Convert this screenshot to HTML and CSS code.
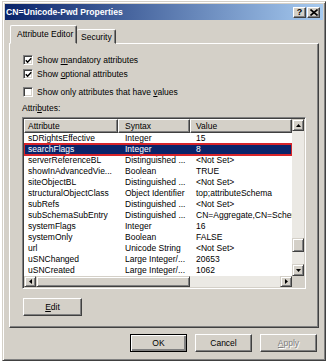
FILE: index.html
```html
<!DOCTYPE html>
<html lang="en">
<head>
    <meta charset="UTF-8">
    <title>CN=Unicode-Pwd Properties</title>
    <link rel="stylesheet" href="styles.css">
</head>
<body>
    <div class="window">
        <div class="titlebar">
            <span class="title">CN=Unicode-Pwd Properties</span>
            <div class="caption-btns">
                <span class="cbtn">?</span>
                <span class="cbtn">
                    <svg width="8" height="7" viewBox="0 0 8 7"><path d="M0.5 0.5 L7.5 6.5 M7.5 0.5 L0.5 6.5" stroke="#000" stroke-width="1.6"/></svg>
                </span>
            </div>
        </div>

        <div class="tabs">
            <span class="tab active">Attribute Editor</span>
            <span class="tab">Security</span>
        </div>

        <div class="panel">
            <label class="check first">
                <span class="box"><svg width="7" height="7" viewBox="0 0 7 7"><path d="M0.8 3.2 L2.6 5.2 L6.3 1.2" fill="none" stroke="#000" stroke-width="1.5"/></svg></span>
                <span>Show <u>m</u>andatory attributes</span>
            </label>
            <label class="check">
                <span class="box"><svg width="7" height="7" viewBox="0 0 7 7"><path d="M0.8 3.2 L2.6 5.2 L6.3 1.2" fill="none" stroke="#000" stroke-width="1.5"/></svg></span>
                <span>Show <u>o</u>ptional attributes</span>
            </label>
            <label class="check third">
                <span class="box"></span>
                <span>Show only attributes that have <u>v</u>alues</span>
            </label>
            <div class="list-label">Attri<u>b</u>utes:</div>

            <div class="listview">
                <div class="lv-main">
                    <div class="lv-body">
                        <div class="lv-head">
                            <span class="hcell c1">Attribute</span>
                            <span class="hcell c2">Syntax</span>
                            <span class="hcell c3">Value</span>
                        </div>
                        <div class="row"><span class="c1">sDRightsEffective</span><span class="c2">Integer</span><span class="c3">15</span></div>
                        <div class="row selected"><span class="c1">searchFlags</span><span class="c2">Integer</span><span class="c3">8</span></div>
                        <div class="row"><span class="c1">serverReferenceBL</span><span class="c2">Distinguished ...</span><span class="c3">&lt;Not Set&gt;</span></div>
                        <div class="row"><span class="c1">showInAdvancedVie...</span><span class="c2">Boolean</span><span class="c3">TRUE</span></div>
                        <div class="row"><span class="c1">siteObjectBL</span><span class="c2">Distinguished ...</span><span class="c3">&lt;Not Set&gt;</span></div>
                        <div class="row"><span class="c1">structuralObjectClass</span><span class="c2">Object Identifier</span><span class="c3">top;attributeSchema</span></div>
                        <div class="row"><span class="c1">subRefs</span><span class="c2">Distinguished ...</span><span class="c3">&lt;Not Set&gt;</span></div>
                        <div class="row"><span class="c1">subSchemaSubEntry</span><span class="c2">Distinguished ...</span><span class="c3">CN=Aggregate,CN=Schema</span></div>
                        <div class="row"><span class="c1">systemFlags</span><span class="c2">Integer</span><span class="c3">16</span></div>
                        <div class="row"><span class="c1">systemOnly</span><span class="c2">Boolean</span><span class="c3">FALSE</span></div>
                        <div class="row"><span class="c1">url</span><span class="c2">Unicode String</span><span class="c3">&lt;Not Set&gt;</span></div>
                        <div class="row"><span class="c1">uSNChanged</span><span class="c2">Large Integer/...</span><span class="c3">20653</span></div>
                        <div class="row"><span class="c1">uSNCreated</span><span class="c2">Large Integer/...</span><span class="c3">1062</span></div>
                    </div>
                    <div class="vscroll">
                        <span class="sbtn"><svg width="5" height="3" viewBox="0 0 5 3"><path d="M2.5 0 L5 3 L0 3 Z" fill="#000"/></svg></span>
                        <div class="track v"><span class="thumb vthumb"></span></div>
                        <span class="sbtn"><svg width="5" height="3" viewBox="0 0 5 3"><path d="M0 0 L5 0 L2.5 3 Z" fill="#000"/></svg></span>
                    </div>
                </div>
                <div class="hscroll">
                    <span class="sbtn"><svg width="3" height="5" viewBox="0 0 3 5"><path d="M0 2.5 L3 0 L3 5 Z" fill="#000"/></svg></span>
                    <div class="track h"><span class="thumb hthumb"></span></div>
                    <span class="sbtn"><svg width="3" height="5" viewBox="0 0 3 5"><path d="M0 0 L3 2.5 L0 5 Z" fill="#000"/></svg></span>
                    <span class="corner"></span>
                </div>
            </div>

            <button class="btn edit"><u>E</u>dit</button>
        </div>

        <div class="footer">
            <button class="btn default">OK</button>
            <button class="btn">Cancel</button>
            <button class="btn" disabled><u>A</u>pply</button>
        </div>
    </div>
</body>
</html>
```

FILE: styles.css
```css
*{margin: 0; padding: 0; box-sizing: border-box;}
body{
    background: #fff;
    padding: 1px 0 0 2px;
    font-family: "Liberation Sans", Arial, sans-serif;
    font-size: 8.5px;
    color: #000;
}
u{text-decoration: underline; text-underline-offset: 1px;}

/* window frame */
.window{
    width: 324px;
    height: 360px;
    background: #d4d0c8;
    border: 1px solid;
    border-color: #d4d0c8 #404040 #404040 #d4d0c8;
    box-shadow: inset 1px 1px #fff, inset -1px -1px #808080;
    padding: 2px;
    display: flex;
    flex-direction: column;
}
.titlebar{
    height: 16px;
    background: linear-gradient(to right, #0a246a, #a6caf0);
    display: flex;
    align-items: center;
    justify-content: space-between;
    padding: 0 3px 0 1px;
}
.title{
    color: #fff;
    font-weight: bold;
    font-size: 8.6px;
}
.caption-btns{
    display: flex;
    gap: 1px;
}
.cbtn{
    width: 13px;
    height: 11px;
    background: #d4d0c8;
    border: 1px solid;
    border-color: #fff #404040 #404040 #fff;
    box-shadow: inset -1px -1px #808080;
    display: flex;
    align-items: center;
    justify-content: center;
    font-weight: bold;
    font-size: 9px;
    line-height: 9px;
}

/* tabs */
.tabs{
    display: flex;
    align-items: flex-end;
    margin: 5px 4px -1px 5px;
    position: relative;
    z-index: 1;
}
.tab{
    height: 15px;
    padding: 0 4px;
    background: #d4d0c8;
    border: 1px solid;
    border-color: #fff #404040 transparent #fff;
    box-shadow: inset -1px 0 #808080;
    border-radius: 2px 2px 0 0;
    display: flex;
    align-items: center;
}
.tab.active{
    height: 19px;
    width: 67px;
    padding: 0 0 2px 6px;
    border-bottom: 1px solid #d4d0c8;
}
.tab:not(.active){
    width: 39px;
    padding-left: 4px;
    border-left: none;
}

/* property page */
.panel{
    height: 285px;
    margin: 0 4px 0 4px;
    border: 1px solid;
    border-color: #fff #404040 #404040 #fff;
    box-shadow: inset -1px -1px #808080;
    padding: 9px 0 0 13px;
    display: flex;
    flex-direction: column;
    align-items: flex-start;
}
.check{
    height: 14px;
    display: flex;
    align-items: center;
    gap: 4px;
}
.check.third{margin-top: 4px;}
.box{
    width: 10px;
    height: 10px;
    background: #fff;
    border: 1px solid;
    border-color: #808080 #fff #fff #808080;
    box-shadow: inset 1px 1px #404040, inset -1px -1px #d4d0c8;
    display: flex;
    align-items: center;
    justify-content: center;
}
.list-label{
    margin-top: 3px;
    margin-left: -1px;
    height: 13px;
    line-height: 13px;
}

/* list view */
.listview{
    margin: 2px 0 0 -1px;
    width: 284px;
    height: 172px;
    border: 1px solid;
    border-color: #808080 #fff #fff #808080;
    box-shadow: inset 1px 1px #404040, inset -1px -1px #d4d0c8;
    padding: 1px;
    display: flex;
    flex-direction: column;
}
.lv-main{
    flex: 1;
    display: flex;
    overflow: hidden;
}
.lv-body{
    flex: 1;
    background: #fff;
    overflow: hidden;
}
.lv-head, .row{
    display: grid;
    grid-template-columns: 94px 72px 1fr;
    white-space: nowrap;
}
.lv-head{
    height: 14px;
}
.hcell{
    background: #d4d0c8;
    border: 1px solid;
    border-color: #fff #404040 #404040 #fff;
    box-shadow: inset -1px -1px #808080;
    line-height: 12px;
    overflow: hidden;
}
.row{
    height: 11px;
    line-height: 11px;
}
.row span{overflow: hidden;}
.c1{padding-left: 4px;}
.c2{padding-left: 7px;}
.c3{padding-left: 6px;}
.hcell.c1{padding-left: 3px;}
.hcell.c2{padding-left: 6px;}
.hcell.c3{padding-left: 5px;}
.row.selected{
    background: #0a246a;
    color: #fff;
    outline: 2px solid #d8252a;
    outline-offset: -1px;
}

/* scroll bars */
.vscroll{
    width: 12px;
    display: flex;
    flex-direction: column;
}
.hscroll{
    height: 11px;
    display: flex;
}
.sbtn, .thumb{
    background: #d4d0c8;
    border: 1px solid;
    border-color: #d4d0c8 #404040 #404040 #d4d0c8;
    box-shadow: inset 1px 1px #fff, inset -1px -1px #808080;
    display: flex;
    align-items: center;
    justify-content: center;
}
.vscroll .sbtn{height: 12px;}
.hscroll .sbtn{width: 12px;}
.track{
    flex: 1;
    background: #ebe9e4;
    display: flex;
}
.track.v{flex-direction: column;}
.vthumb{
    height: 14px;
    margin-top: 107px;
}
.hthumb{
    width: 154px;
}
.corner{
    width: 12px;
    background: #d4d0c8;
}

/* buttons */
.btn{
    width: 57px;
    height: 18px;
    font-family: inherit;
    font-size: 8.5px;
    color: #000;
    background: #d4d0c8;
    border: 1px solid;
    border-color: #fff #404040 #404040 #fff;
    box-shadow: inset -1px -1px #808080;
}
.btn.edit{
    width: 59px;
    margin: 9px 0 0 0;
}
.btn.default{
    border-color: #000;
    box-shadow: inset 1px 1px #fff, inset -2px -2px #808080;
}
.btn:disabled{
    color: #808080;
    text-shadow: 1px 1px #fff;
}
.footer{
    display: flex;
    justify-content: flex-end;
    gap: 8px;
    margin-top: 6px;
    padding-right: 6px;
}
```
